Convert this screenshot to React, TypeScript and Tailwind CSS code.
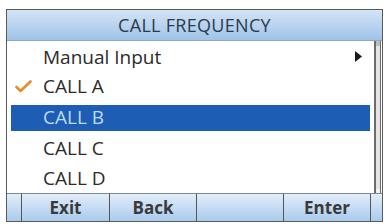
import React from 'react';

const items = ['Manual Input', 'CALL A', 'CALL B', 'CALL C', 'CALL D'];

const App: React.FC = () => {
  const selected = 2;
  const checked = 1;

  return (
    <div className="w-[387px] h-[224px] bg-white pl-[6px] pt-[9px]" style={{ fontFamily: '"Open Sans", Lato, sans-serif' }}>
      <div className="w-[377px] h-[213px] border border-[#5a5a5a] flex flex-col">
        {/* Header */}
        <div className="h-[31px] shrink-0 flex items-center justify-center bg-gradient-to-b from-[#d4e4f5] to-[#9fc3e8] border-b border-[#8aa8c8] text-[18px] tracking-[0.3px] text-[#2c3a4c]">
          CALL FREQUENCY
        </div>

        {/* List + scrollbar */}
        <div className="flex-1 flex min-h-0">
          <div className="flex-1 flex flex-col pt-[1px]">
            {items.map((label, i) => (
              <div
                key={label}
                className={
                  i === selected
                    ? 'h-[26px] mx-[4px] my-[3px] bg-[#1d5db4] flex items-center pl-[32px] text-[19px] text-[#bcd9f6]'
                    : 'h-[30px] flex items-center relative pl-[36px] pr-[8px] text-[19px] text-[#2b2b2b]'
                }
              >
                {i === checked && (
                  <svg className="absolute left-[8px] top-[8px]" width="17" height="13" viewBox="0 0 17 13">
                    <path d="M1.5 7 L5.5 11 L15.5 1.5" fill="none" stroke="#ee8a2a" strokeWidth="2.6" strokeLinecap="round" strokeLinejoin="round" />
                  </svg>
                )}
                <span className="flex-1">{label}</span>
                {i === 0 && (
                  <svg width="7" height="11" viewBox="0 0 7 11" className="mr-[4px]">
                    <path d="M0 0 L7 5.5 L0 11 Z" fill="#1a1a1a" />
                  </svg>
                )}
              </div>
            ))}
          </div>
          <div className="w-[7px] shrink-0 border-l-2 border-r border-[#6b6b6b] bg-[#e4e4e4] mr-[1px] flex flex-col">
            <div className="h-[5px] bg-[#bdbdbd]" />
            <div className="flex-1" />
            <div className="h-[4px] bg-[#f4f4f4]" />
          </div>
        </div>

        {/* Footer */}
        <div className="h-[28px] shrink-0 flex border-t border-[#7a8a9a] bg-gradient-to-b from-[#e2edf9] to-[#a8cbee] text-[17px] font-bold text-[#3a3a3a]">
          <div className="w-[15px] border-r border-[#555]" />
          <div className="w-[88px] border-r border-[#555] flex items-center justify-center">Exit</div>
          <div className="w-[87px] border-r border-[#555] flex items-center justify-center">Back</div>
          <div className="w-[87px] border-r border-[#555]" />
          <div className="w-[87px] border-r border-[#555] flex items-center justify-center">Enter</div>
          <div className="flex-1" />
        </div>
      </div>
    </div>
  );
};

export default App;
